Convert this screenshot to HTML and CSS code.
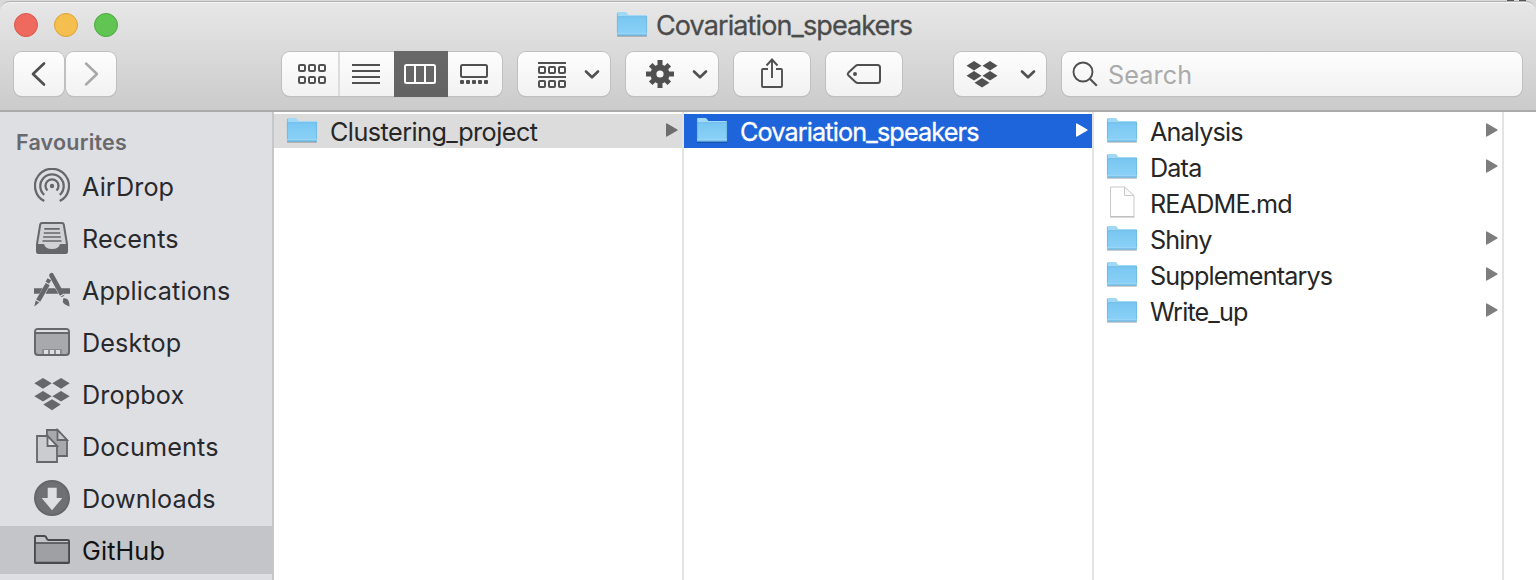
FILE: index.html
```html
<!DOCTYPE html>
<html lang="en">
<head>
<meta charset="utf-8">
<title>Covariation_speakers</title>
<link rel="stylesheet" href="styles.css">
</head>
<body>
<svg class="defs" width="0" height="0">
  <defs>
    <linearGradient id="blue" x1="0" y1="0" x2="0" y2="1"><stop offset="0" stop-color="#79c7f2"/><stop offset="1" stop-color="#8bd1f7"/></linearGradient>
    <symbol id="folder" viewBox="0 0 32 28">
      <path d="M1 26.2h30" stroke="#000" stroke-opacity=".22" stroke-width="1.4"/>
      <path d="M1 25V3Q1 2 2 2h7.3q.8 0 1.3.6L12 4.5q.4.5 1 .5h17q1 0 1 1v19z" fill="#9fd9f8"/>
      <path d="M1 7h30v17.4q0 .9-1 .9H2q-1 0-1-.9z" fill="url(#blue)"/>
      <path d="M1 6.7h30" stroke="#66b2df" stroke-width=".8"/>
      <path d="M1.4 3v21M30.6 6v18" stroke="#69b4dd" stroke-width=".7"/>
      <path d="M1 23.3h30" stroke="#a2dbfa" stroke-width=".7"/>
      <path d="M1.3 25.2h29.4" stroke="#5fa9d4" stroke-width="1"/>
    </symbol>
    <symbol id="chevron" viewBox="0 0 16 12"><path d="M2 2.500 8 8.300 14 2.500" fill="none" stroke="#505050" stroke-width="2.600" stroke-linecap="round" stroke-linejoin="round"/></symbol>
    <symbol id="arrow" viewBox="0 0 12 14"><path d="M.7 1v12L11 7z" fill="currentColor" stroke="currentColor" stroke-width="1.400" stroke-linejoin="round"/></symbol>
  </defs>
</svg>
<div class="window">
  <header class="header">
    <div class="titlebar">
      <span class="light red"></span><span class="light yellow"></span><span class="light green"></span>
      <svg class="title-icon" width="32" height="28"><use href="#folder"/></svg>
      <h1 class="title">Covariation_speakers</h1>
      <span class="behind"><i></i><i></i></span>
    </div>
    <div class="toolbar">
      <div class="nav">
        <button class="btn nav-btn"><svg width="16" height="26" viewBox="0 0 16 26"><path d="M13 2.500 2 13l11 10.500" fill="none" stroke="#505050" stroke-width="2.700" stroke-linecap="round" stroke-linejoin="round"/></svg></button>
        <button class="btn nav-btn"><svg width="16" height="26" viewBox="0 0 16 26"><path d="M3 2.500 14 13 3 23.500" fill="none" stroke="#a9a9a9" stroke-width="2.500" stroke-linecap="round" stroke-linejoin="round"/></svg></button>
      </div>
      <div class="btn views">
        <span class="seg first"><svg width="28" height="20" viewBox="0 0 28 20"><g fill="none" stroke="#505050" stroke-width="2"><rect x="1" y="1" width="6" height="6" rx="1.200"/><rect x="11" y="1" width="6" height="6" rx="1.200"/><rect x="21" y="1" width="6" height="6" rx="1.200"/><rect x="1" y="13" width="6" height="6" rx="1.200"/><rect x="11" y="13" width="6" height="6" rx="1.200"/><rect x="21" y="13" width="6" height="6" rx="1.200"/></g></svg></span>
        <span class="seg"><svg class="list" width="28" height="20" viewBox="0 0 28 20"><path d="M0 1h28M0 7h28M0 13h28M0 19h28" stroke="#505050" stroke-width="2"/></svg></span>
        <span class="seg active"><svg class="columns" width="32" height="20" viewBox="0 0 32 20"><path d="M11 1v18M21 1v18" stroke="#fff" stroke-width="2"/><rect x="1" y="1" width="30" height="18" rx="1.500" fill="none" stroke="#fff" stroke-width="2"/></svg></span>
        <span class="seg"><svg class="list" width="28" height="20" viewBox="0 0 28 20"><rect x="1" y="1" width="26" height="12" rx="1.500" fill="none" stroke="#505050" stroke-width="2"/><g fill="#505050"><rect y="16" width="4" height="4" rx="1"/><rect x="6" y="16" width="4" height="4" rx="1"/><rect x="12" y="16" width="4" height="4" rx="1"/><rect x="18" y="16" width="4" height="4" rx="1"/><rect x="24" y="16" width="4" height="4" rx="1"/></g></svg></span>
      </div>
      <button class="btn drop">
        <svg class="group" width="28" height="26" viewBox="0 0 28 26"><path d="M0 1h28M0 15h28" stroke="#505050" stroke-width="2"/><g fill="none" stroke="#505050" stroke-width="2"><rect x="1" y="5" width="6" height="6" rx="1"/><rect x="11" y="5" width="6" height="6" rx="1"/><rect x="21" y="5" width="6" height="6" rx="1"/><rect x="1" y="19" width="6" height="6" rx="1"/><rect x="11" y="19" width="6" height="6" rx="1"/><rect x="21" y="19" width="6" height="6" rx="1"/></g></svg>
        <svg class="chev" width="16" height="12"><use href="#chevron"/></svg>
      </button>
      <button class="btn drop">
        <svg width="28" height="28" viewBox="-14 -14 28 28"><circle r="6.600" fill="none" stroke="#505050" stroke-width="6"/><g stroke="#505050" stroke-width="5"><path d="M0-8v-6M0 8v6M-8 0h-6M8 0h6"/><path d="M-5.700-5.700l-3.600-3.600M5.700 5.700l3.600 3.600M-5.700 5.700l-3.600 3.600M5.700-5.700l3.600-3.600"/></g></svg>
        <svg class="chev" width="16" height="12"><use href="#chevron"/></svg>
      </button>
      <button class="btn single"><svg class="share" width="24" height="32" viewBox="0 0 24 32"><path d="M8 12H3q-1 0-1 1v16q0 1 1 1h18q1 0 1-1V13q0-1-1-1h-5M12 21V3M6.500 8.500 12 2.500l5.500 6" fill="none" stroke="#505050" stroke-width="1.900"/></svg></button>
      <button class="btn single"><svg width="36" height="22" viewBox="0 0 36 22"><path d="M12 2h19.500Q34 2 34 4.500v13q0 2.500-2.500 2.500H12q-1.500 0-2.500-1L2.300 12.200q-1-1.200 0-2.400L9.500 3Q10.500 2 12 2z" fill="none" stroke="#505050" stroke-width="2"/><circle cx="9" cy="11" r="2" fill="#505050"/></svg></button>
      <button class="btn drop dropbox">
        <svg width="32" height="28" viewBox="0 0 32 28"><path d="M.5 5.700 8 1l7.500 4.700L8 10.400zM16.500 5.700 24 1l7.500 4.700-7.500 4.700zM.5 15.700 8 11l7.500 4.700L8 20.400zM16.500 15.700 24 11l7.500 4.700-7.500 4.700zM8.500 22.700 16 18l7.500 4.700L16 27.500z" fill="#505050"/></svg>
        <svg class="chev" width="16" height="12"><use href="#chevron"/></svg>
      </button>
      <div class="btn search"><svg width="26" height="26" viewBox="0 0 26 26"><circle cx="11" cy="11" r="9.500" fill="none" stroke="#505050" stroke-width="1.900"/><path d="m17.800 17.800 7 7" stroke="#505050" stroke-width="2.100"/></svg><span class="placeholder">Search</span></div>
    </div>
  </header>
  <main class="content">
    <aside class="sidebar">
      <h2 class="heading">Favourites</h2>
      <ul class="places">
        <li class="place"><svg class="glyph" viewBox="0 0 36 36"><g fill="none" stroke="#65676b" stroke-width="2.300"><path d="M10.300 33A17 17 0 1 1 25.700 33"/><path d="M10.200 26.800A11.700 11.700 0 1 1 25.800 26.800"/><path d="M13.500 22.500A6.500 6.500 0 1 1 22.500 22.500"/></g><circle cx="18" cy="18" r="2.200" fill="#65676b"/></svg><span>AirDrop</span></li>
        <li class="place"><svg class="glyph" viewBox="0 0 36 36"><path d="M8 3h20q1.500 0 1.800 1.500L33 24v7.500q0 1.500-1.500 1.500h-27Q3 33 3 31.500V24L6.200 4.500Q6.500 3 8 3z" fill="#d0d1d4" stroke="#65676b" stroke-width="2"/><path d="M3 24h7q1 5 8 5t8-5h7v8q0 1-1 1H4q-1 0-1-1z" fill="#65676b"/><path d="M10.300 8.800h15.400M9.800 13h16.400M9.200 17h17.600M8.500 21h19" stroke="#65676b" stroke-width="1.700"/></svg><span>Recents</span></li>
        <li class="place"><svg class="glyph" viewBox="0 0 36 36"><path d="M0 16.200h8.500l-3.200 5.600H0zM14.500 16.200h6.700l3.200 5.600H11.500zM26.800 16.200H36v5.600h-6z" fill="#65676b"/><path d="M17.500 3.300 28 22.500" stroke="#65676b" stroke-width="4.800" stroke-linecap="round"/><path d="m13.500 6.200 3.600 2.100-2 3.400-3.500-2z" fill="#65676b"/><path d="m11.700 11 4 2.300-9.500 16.500-4-2.300z" fill="#65676b"/><path d="m1.700 28.600 3.600 2L.3 34.600z" fill="#65676b"/><path d="M29.300 26.200q4.200-.5 5.300 2.800.8 2.200 1 5.500-5.600-1.600-6.800-4.500z" fill="#65676b"/><path d="m25.700 24.400 4.500-2.500" stroke="#dedfe3" stroke-width="1.200"/></svg><span>Applications</span></li>
        <li class="place"><svg class="glyph" viewBox="0 0 36 36"><rect x="1" y="5" width="34" height="26" rx="3" fill="#a7a9ad" stroke="#65676b" stroke-width="2"/><path d="M3 6h30q1 0 1 2H2q0-2 1-2z" fill="#dedfe3"/><path d="M1 9h34" stroke="#65676b" stroke-width="2"/><path d="M8 25h20v5H8z" fill="#8b8d91"/><path d="M10 26h4v4h-4zM16 26h4v4h-4zM22 26h4v4h-4z" fill="#dedfe3"/></svg><span>Desktop</span></li>
        <li class="place"><svg class="glyph" viewBox="0 0 36 36"><path d="M.3 7.300 9 2l8.700 5.300L9 12.700zM18.300 7.300 27 2l8.700 5.300-8.700 5.400zM.3 20.300 9 15l8.700 5.300L9 25.500zM18.300 20.300 27 15l8.700 5.300-8.700 5.200zM9.300 28.600l8.700-5.400 8.700 5.400-8.700 5.700z" fill="#65676b"/></svg><span>Dropbox</span></li>
        <li class="place"><svg class="glyph" viewBox="0 0 36 36"><g stroke="#65676b" stroke-width="1.800"><path d="M12.900 2h10.600L33 12v16H12.900z" fill="#a7a9ad"/><path d="M23.500 2v10H33z" fill="#c9cacd"/><path d="M3 8h10.500L23 17.500V34H3z" fill="#cbccd0"/><path d="M13.500 8v10H23z" fill="#dedfe3"/></g></svg><span>Documents</span></li>
        <li class="place"><svg class="glyph" viewBox="0 0 36 36"><circle cx="18" cy="18" r="17" fill="#6e7074" stroke="#65676b" stroke-width="2"/><path d="M13.700 7.700h9V18h5.600L18 30.300 7.700 18h6z" fill="#dedfe3"/></svg><span>Downloads</span></li>
        <li class="place selected"><svg class="glyph" viewBox="0 0 36 36"><path d="M1 30V5q0-1 1-1h8.500q1 0 1.500 1l1 2q.4 1 1.500 1H34q1 0 1 1v21q0 1-1 1H2q-1 0-1-1z" fill="#c2c3c7" stroke="#494a4d" stroke-width="1.900"/><path d="M1 11h34v19.500H1z" fill="#9fa0a4" stroke="#494a4d" stroke-width="1.700"/></svg><span>GitHub</span></li>
      </ul>
    </aside>
    <section class="column">
      <div class="row parent"><svg class="file" width="32" height="28"><use href="#folder"/></svg><span>Clustering_project</span><svg class="more" width="12" height="14"><use href="#arrow"/></svg></div>
    </section>
    <section class="column">
      <div class="row current"><svg class="file" width="32" height="28"><use href="#folder"/></svg><span>Covariation_speakers</span><svg class="more" width="12" height="14"><use href="#arrow"/></svg></div>
    </section>
    <section class="column">
      <div class="row"><svg class="file" width="32" height="28"><use href="#folder"/></svg><span>Analysis</span><svg class="more" width="12" height="14"><use href="#arrow"/></svg></div>
      <div class="row"><svg class="file" width="32" height="28"><use href="#folder"/></svg><span>Data</span><svg class="more" width="12" height="14"><use href="#arrow"/></svg></div>
      <div class="row"><svg class="file" width="32" height="34" viewBox="0 0 32 34"><path d="M4.500 2h14L28 11v20.500H4.500z" fill="#fff" stroke="#c9c9c9"/><path d="M18.500 2v8.500H28z" fill="#fafafa" stroke="#c9c9c9"/><path d="M4 32h24.500" stroke="#b4b4b4"/></svg><span class="readme">README.md</span></div>
      <div class="row"><svg class="file" width="32" height="28"><use href="#folder"/></svg><span>Shiny</span><svg class="more" width="12" height="14"><use href="#arrow"/></svg></div>
      <div class="row"><svg class="file" width="32" height="28"><use href="#folder"/></svg><span>Supplementarys</span><svg class="more" width="12" height="14"><use href="#arrow"/></svg></div>
      <div class="row"><svg class="file" width="32" height="28"><use href="#folder"/></svg><span>Write_up</span><svg class="more" width="12" height="14"><use href="#arrow"/></svg></div>
    </section>
    <section class="preview"></section>
  </main>
</div>
</body>
</html>
```
FILE: styles.css
```css
* { box-sizing: border-box; }
body { margin: 0; width: 1536px; height: 580px; overflow: hidden; background: #d8d8d8; font-family: Inter, "Liberation Sans", sans-serif; font-size: 25.2px; color: #262626; }
svg { display: block; flex: none; }
.defs { position: absolute; }
.window { height: 580px; padding-top: 1px; display: flex; flex-direction: column; }
.header { height: 111px; flex: none; border-top: 1px solid #b2b2b2; border-bottom: 2px solid #ababab; border-radius: 10px 10px 0 0; background: linear-gradient(#e7e7e7, #cbcbcb); box-shadow: inset 0 1px #f4f4f4; }
.titlebar { height: 50px; padding: 0 0 4px 14px; display: flex; align-items: center; position: relative; }
.behind { position: absolute; right: 10px; top: -2px; display: flex; gap: 5px; }
.behind i { width: 7px; height: 1px; background: #555; }
.light { width: 24px; height: 24px; margin-right: 16px; border-radius: 50%; border: 1px solid; flex: none; }
.red { background: #ee6a5f; border-color: #d9564c; }
.yellow { background: #f5bf4f; border-color: #dca23b; }
.green { background: #61c554; border-color: #4fa83f; }
.title-icon { margin: -2px 0 0 482px; }
.title { margin: 2px 0 0 8px; font-size: 27px; line-height: 32px; font-weight: 400; color: #4b4b4b; letter-spacing: -0.9px; -webkit-text-stroke: 0.3px; }
.toolbar { display: flex; gap: 16px; padding-left: 14px; height: 44px; }
.btn { height: 44px; padding: 0; border: 0; border-radius: 8px; background: linear-gradient(#fdfdfd, #f2f2f2); box-shadow: 0 0 0 1px #c0c0c0, 0 1px 1px #a9a9a9; display: flex; align-items: center; flex: none; }
.nav { display: flex; gap: 2px; margin-right: 150px; }
.nav-btn { width: 50px; justify-content: center; }
.views { width: 220px; }
.seg { width: 54px; height: 44px; display: flex; align-items: center; justify-content: center; }
.first { width: 58px; border-right: 2px solid #dcdcdc; padding-left: 3px; }
.active { height: 46px; background: linear-gradient(#686868, #636363); }
.columns, .list { margin-right: 2px; }
.drop { width: 92px; padding-left: 20px; }
.group { margin-top: 2px; }
.chev { margin: 2px 0 0 18px; }
.dropbox { margin-left: 36px; padding-left: 12px; }
.dropbox .chev { margin-left: 22px; }
.single { width: 76px; justify-content: center; }
.share { margin-bottom: 3px; }
.search { width: 460px; padding-left: 10px; }
.placeholder { margin: 2px 0 0 10px; color: #aaa; letter-spacing: 0.1px; }
.content { flex: 1; display: flex; background: #fff; }
.sidebar { width: 274px; flex: none; border-right: 2px solid #c6c7cb; background: #dedfe3; }
.heading { margin: 0; padding: 17px 0 0 16px; height: 50px; font-size: 21.5px; line-height: 26px; font-weight: 600; color: #68696d; letter-spacing: 0.2px; }
.places { list-style: none; margin: 0; padding: 0; display: flex; flex-direction: column; gap: 4px; }
.place { height: 48px; padding-left: 34px; display: flex; align-items: center; color: #28292c; line-height: 36px; letter-spacing: 0.13px; }
.glyph { width: 36px; height: 36px; margin-right: 12px; }
.place span { padding-top: 2px; }
.selected { background: #c4c5c9; color: #111214; }
.column { width: 410px; flex: none; padding-top: 2px; border-right: 2px solid #e3e3e3; display: flex; flex-direction: column; gap: 2px; }
.row { height: 34px; padding: 0 4px 0 12px; display: flex; align-items: center; color: #262626; letter-spacing: -0.85px; line-height: 34px; }
.row span { margin: 1px 0 0 12px; }
.file { margin-top: -3px; }
.more { margin: -3px 0 0 auto; color: #7d7d7d; }
.parent { background: #dcdcdc; letter-spacing: -0.53px; }
.parent .more { color: #6e6e6e; }
.current { background: #1e64da; color: #fff; -webkit-text-stroke: 0.3px; }
.current .more { color: #fff; }
.preview { flex: 1; }
```
